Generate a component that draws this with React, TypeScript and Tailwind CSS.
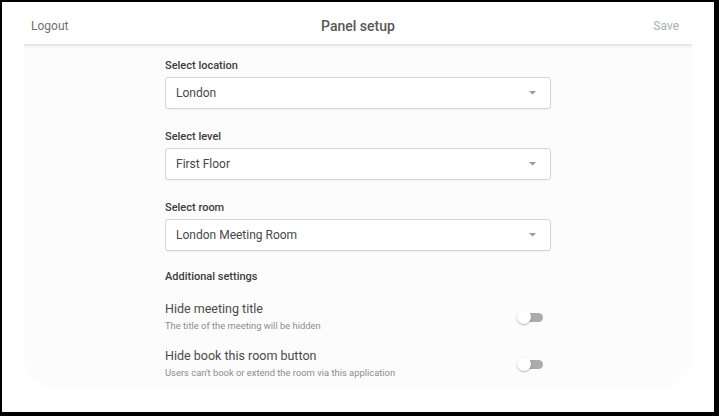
const selects = [
  { label: "Select location", value: "London" },
  { label: "Select level", value: "First Floor" },
  { label: "Select room", value: "London Meeting Room" },
];

const toggles = [
  { title: "Hide meeting title", desc: "The title of the meeting will be hidden" },
  { title: "Hide book this room button", desc: "Users can't book or extend the room via this application" },
];

function Select({ label, value }: { label: string; value: string }) {
  return (
    <div className="mb-[21px]">
      <div className="text-[11px] font-medium text-[#3d3d3d] leading-[14px] mb-[4px]">{label}</div>
      <div className="h-[32px] border border-[#d6d6d6] rounded-[3px] bg-white flex items-center justify-between pl-[10px] pr-[10px] shadow-[0_1px_1px_rgba(0,0,0,0.04)]">
        <span className="text-[12px] text-[#484848]">{value}</span>
        <svg width="7" height="4" viewBox="0 0 7 4" className="mr-[4px]">
          <path d="M0 0 L7 0 L3.5 3.5 Z" fill="#9a9a9a" />
        </svg>
      </div>
    </div>
  );
}

function Toggle() {
  return (
    <div className="relative w-[26px] h-[14px] mr-[8px]">
      <div className="absolute left-[6px] right-0 top-[3px] h-[9px] rounded-full bg-[#ababab]" />
      <div className="absolute left-0 top-0 w-[14px] h-[14px] rounded-full bg-white shadow-[0_1px_2px_rgba(0,0,0,0.28)]" />
    </div>
  );
}

export default function App() {
  return (
    <div
      className="w-[719px] h-[416px] bg-black pt-[2px] pl-[2px] pr-[5px] pb-[4px]"
      style={{ fontFamily: "Roboto, 'Liberation Sans', sans-serif" }}
    >
      <div className="w-full h-full bg-white flex flex-col">
        <div className="h-[42px] pt-[5px] px-[29px] flex items-center justify-between relative">
          <span className="text-[12px] text-[#707070]">Logout</span>
          <span className="absolute left-0 right-0 top-[14px] text-center text-[14px] font-medium text-[#575757] pointer-events-none">
            Panel setup
          </span>
          <span className="text-[12px] text-[#a7b0b0] mr-[6px]">Save</span>
        </div>
        <div className="mx-[22px] h-[346px] bg-[#fcfcfc] rounded-b-[34px] border-t-2 border-[#e6e6e6] shadow-[inset_0_2px_2px_rgba(0,0,0,0.03)] pt-[13px]">
          <div className="w-[386px] mx-auto">
            {selects.map((s) => (
              <Select key={s.label} label={s.label} value={s.value} />
            ))}
            <div className="text-[11px] font-medium text-[#3d3d3d] leading-[14px] -mt-[2px] mb-[17px]">
              Additional settings
            </div>
            {toggles.map((t) => (
              <div key={t.title} className="flex items-center justify-between mb-[16px]">
                <div>
                  <div className="text-[12.5px] text-[#4a4a4a] leading-[15px]">{t.title}</div>
                  <div className="text-[9.4px] text-[#8c8c8c] leading-[12px] mt-[4px]">{t.desc}</div>
                </div>
                <Toggle />
              </div>
            ))}
          </div>
        </div>
      </div>
    </div>
  );
}
